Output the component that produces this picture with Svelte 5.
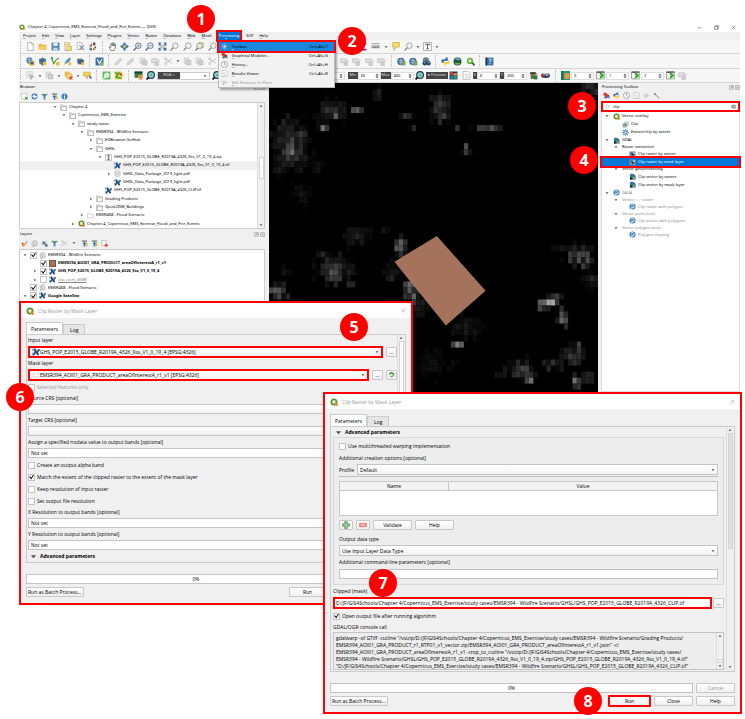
<script lang="ts">
  const icons: Record<string, string> = {
    q: '<path d="M8 1a7 7 0 1 0 0 14 7 7 0 0 0 0-14zm0 3.6A3.4 3.4 0 1 1 8 11.4 3.4 3.4 0 0 1 8 4.600z" fill="#589632" fill-rule="evenodd"/><path d="M8 8h3.500l4 4.500V15.500H12z" fill="#ee7913"/><path d="M8 8l3 .3-.5 2.500z" fill="#f0e64a"/>',
    page: '<path d="M3 1h7l3 3v11H3z" fill="#fff" stroke="#888"/><path d="M10 1v3h3" fill="none" stroke="#888"/>',
    open: '<path d="M1 3h5l1 2h8v9H1z" fill="#e9b63a"/><path d="M1 14l2-7h13l-2 7z" fill="#f6cf62"/>',
    save: '<path d="M1 1h14v14H1z" fill="#4f81ad"/><path d="M4 1h8v6H4z" fill="#e8eef4"/><path d="M4 10h8v5H4z" fill="#c9d8e5"/>',
    layout: '<path d="M3 1h9v14H3z" fill="#fff" stroke="#999"/><path d="M3 3h9v3H3z" fill="#f3c63d"/><path d="M6 8h9v7H6z" fill="#f7df8e" stroke="#c49a20"/>',
    layoutmgr: '<path d="M2 1h9v12H2z" fill="#f7f7f7" stroke="#999"/><path d="M6 6l8 8M14 6l-8 8" stroke="#7d93a8" stroke-width="2"/>',
    style: '<path d="M2 9l4-7 2 5z" fill="#d5482f"/><path d="M9 1h4v5H9z" fill="#444"/><path d="M3 10h4v5H3z" fill="#3b6fa5"/><path d="M9 14l5-6" stroke="#3a3a3a" stroke-width="2"/><circle cx="12" cy="13" r="2" fill="#efb91e"/>',
    hand: '<path d="M5 15L2 9l1.500-1L5 10V3l1.500-.5L7.500 7V1.500H9L9.500 7l1-5h1.500l-.3 5.500 1.300-3 1 .5-1 6-2 4z" fill="#fff" stroke="#444"/>',
    pan: '<path d="M8 0l3 4-1 2 2-1 4 3-4 3-2-1 1 2-3 4-3-4 1-2-2 1-4-3 4-3 2 1-1-2z" fill="#3f78ac"/><path d="M8 5l3 3-3 3-3-3z" fill="#f2c12e"/>',
    zoom: '<circle cx="9.500" cy="6.500" r="5" fill="#e5edf5" stroke="#516a82" stroke-width="1.500"/><path d="M6 10l-5 5" stroke="#516a82" stroke-width="2.500"/><path d="M7 6.500h5M9.500 4v5" stroke="#496f93"/>',
    zoomout: '<circle cx="9.500" cy="6.500" r="5" fill="#e5edf5" stroke="#516a82" stroke-width="1.500"/><path d="M6 10l-5 5" stroke="#516a82" stroke-width="2.500"/><path d="M7 6.500h5" stroke="#496f93"/>',
    full: '<path d="M1 1h5L4 4 6 6 1 6zM15 1v5h-5l2-2-2-3zM1 15v-5h5l-2 2 2 3zM15 15h-5v-5h5z" fill="#3f6f9c"/><circle cx="8" cy="8" r="3" fill="#e7eef5" stroke="#516a82"/>',
    mag: '<circle cx="9.500" cy="6.500" r="5" fill="#f1f1ee" stroke="#8d8d8d" stroke-width="1.300"/><path d="M6 10l-5 5" stroke="#777" stroke-width="2"/>',
    magx: '<path d="M7 1h8v9H7z" fill="#efe8b7" stroke="#a9a16e"/><circle cx="8" cy="7" r="5" fill="#eee" fill-opacity=".7" stroke="#666"/><path d="M5 11l-4 4" stroke="#555" stroke-width="2"/>',
    sigma: '<path d="M3 1h10v3H7l4 4-4 4h6v3H3v-2l5-5-5-5z" fill="#8b1a8b"/>',
    ruler: '<path d="M1 6h14v5H1z" fill="#8c8c8c"/><path d="M3 6v3M6 6v2M9 6v3M12 6v2" stroke="#fff"/><path d="M1 3h14" stroke="#555" />',
    tip: '<path d="M3 1h12v8H9l-4 6V9H3z" fill="#f4dc6c" stroke="#b99b2e"/>',
    text: '<path d="M1 1h14v14H1z" fill="#fff" stroke="#777"/><path d="M4 4h8v2M8 4v8M6 12h4" stroke="#444" fill="none" stroke-width="1.500"/>',
    globe: '<circle cx="6" cy="6" r="5.500" fill="#5186b6"/><path d="M1 5h10M6 1v10" stroke="#b8d0e5"/><path d="M6 7h9v8H6z" fill="#e3a72d"/><path d="M8 9h5v4H8z" fill="#39658f"/>',
    cube: '<path d="M8 1l6 3v7l-6 4-6-4V4z" fill="#4c7aa5"/><path d="M2 4l6 3 6-3M8 7v8" stroke="#173d61" fill="none"/><circle cx="11.500" cy="11.500" r="3.500" fill="#efbd34"/>',
    vector: '<path d="M1 2l4 10 4-7 5-3" stroke="#4d8a46" stroke-width="2" fill="none"/><circle cx="2" cy="2" r="2" fill="#4d8a46"/><circle cx="12" cy="12" r="3.500" fill="#efbd34"/>',
    feather: '<path d="M2 14C4 6 8 2 14 1c0 6-4 10-10 11z" fill="#5f96bf"/><circle cx="12" cy="12" r="3" fill="#efbd34"/>',
    chip: '<path d="M2 3h10v8H2z" fill="#6f7f8f"/><path d="M4 5h10v8H4z" fill="#386591"/><circle cx="12" cy="12" r="3" fill="#efbd34"/>',
    vbox: '<path d="M1 1h14v14H1z" fill="#3b6f9e"/><path d="M4 4l4 8 4-8" stroke="#fff" stroke-width="2" fill="none"/><path d="M10 10h5v5h-5z" fill="#91c35a"/>',
    pencil: '<path d="M2 14l1-4 8-8 3 3-8 8z" fill="#d5d5d5" stroke="#b2b2b2"/>',
    gbox: '<path d="M2 2h8v9H2z" fill="#e4e4e4" stroke="#b6b6b6"/><path d="M6 6h8v8H6z" fill="#cfcfcf" stroke="#b0b0b0"/>',
    gscis: '<path d="M2 3l12 8M2 11l12-8" stroke="#b8b8b8" stroke-width="1.500"/><circle cx="3" cy="12" r="2" fill="none" stroke="#b8b8b8"/><circle cx="3" cy="3" r="2" fill="none" stroke="#b8b8b8"/>',
    gtag: '<path d="M1 3h10l4 4-4 3H1z" fill="#dedede" stroke="#b9b9b9"/><path d="M7 9h6v6H7z" fill="#d0d0d0" stroke="#b5b5b5"/>',
    metaglobe: '<circle cx="7" cy="8" r="6.500" fill="#3c6c99"/><path d="M3 6h8M3 10h8M7 2v12" stroke="#b7cde0" stroke-width="1.500"/><path d="M9 7h6v8H9z" fill="#7fa15f"/>',
    binoc: '<circle cx="7" cy="6" r="5.500" fill="#6c7f90"/><circle cx="5" cy="11" r="4" fill="#274763"/><circle cx="11.500" cy="11" r="4" fill="#274763"/><path d="M4 10h2M11 10h2" stroke="#a8c5de" stroke-width="2"/>',
    python: '<path d="M8 1h4v6H5v3H1V5l2-1h5z" fill="#3a72a4"/><path d="M8 15H5V9h7V6h3v5l-2 2H8z" fill="#f6ce45"/>',
    ball: '<circle cx="8" cy="8" r="7" fill="#264f3a"/><path d="M3 5c3-4 8-3 10 0-3 3-7-1-10 0z" fill="#62b6d9"/><path d="M3 10h10c-2 5-8 5-10 0z" fill="#6fb34b"/>',
    osm: '<circle cx="7" cy="7" r="5.500" fill="#5cb73d"/><circle cx="7" cy="7" r="2.500" fill="#fff"/><path d="M11 10l4 5" stroke="#2e6b1d" stroke-width="3"/>',
    help: '<path d="M1 1h14v14H1z" fill="#4177a8"/><path d="M1 1h3v14H1z" fill="#23384b"/><path d="M7 5c1-2 5-1 4 1l-2 2v1.500M9 11v1.500" stroke="#fff" fill="none" stroke-width="1.500"/>',
    sel: '<path d="M1 1h11v11H1z" fill="#e9e9e9" stroke="#aaa" stroke-dasharray="2"/><path d="M6 6l8 4-4 1-1 4z" fill="#c9c9c9" stroke="#999"/>',
    desel: '<path d="M1 1h9v9H1z" fill="#f2c14a"/><path d="M5 5h9v9H5z" fill="#f8d77c" stroke="#c99c26"/><path d="M10 10l5 5M15 10l-5 5" stroke="#d23" stroke-width="2"/>',
    label: '<path d="M1 2h12v7H8v4H6V9H1z" fill="#f5d45a" stroke="#c39c29"/><path d="M11 9l4 4" stroke="#3b6f9e" stroke-width="3"/>',
    sgreen: '<path d="M1 1h14v14H1z" fill="#5cb85a"/><circle cx="8.500" cy="7.500" r="4" fill="#cfeccb" stroke="#fff" stroke-width="1.500"/><path d="M6 10l-4 4" stroke="#fff" stroke-width="2"/>',
    plug: '<path d="M1 1h14v14H1z" fill="#e8d24b"/><path d="M2 2l5 5M9 2l-5 9 9 2" stroke="#3c9b3b" stroke-width="2.500" fill="none"/><path d="M10 4l4 4" stroke="#b4342a" stroke-width="3"/>',
    scp: '<path d="M1 1h14v11H1z" fill="#2f7f46"/><path d="M1 1h14v3H1z" fill="#1b3c2b"/><path d="M7 7h8v8H9z" fill="#ef9142"/>',
    eye: '<circle cx="9" cy="7" r="6" fill="#8fd0d8" stroke="#1d3b4c" stroke-width="2"/><path d="M5 11l-4 4" stroke="#111" stroke-width="3"/><path d="M6 8l5-3v4z" fill="#3da34d"/>',
    rgbg: '<path d="M1 1h14v14H1z" fill="#153b5c"/><path d="M2 2h5v5H2z" fill="#e33"/><path d="M8 4h6v4H8z" fill="#f2a52a"/><path d="M3 8h5v6H3z" fill="#2c82c9"/><path d="M9 9h5v5H9z" fill="#35a14a"/>',
    bin: '<path d="M2 2h10v4H2z" fill="#3b3b3b"/><path d="M3 6h8v8H3z" fill="#65733a"/><path d="M8 8h7v7H8z" fill="#2f7f46"/><circle cx="12" cy="6" r="2" fill="#d65a2c"/>',
    cloud: '<ellipse cx="8" cy="8" rx="8" ry="4.500" fill="#2e3640"/><path d="M1 6h6v4H1z" fill="#c4382e"/><path d="M8 6h6v3H8z" fill="#4ea6e0"/><path d="M4 4h8v2H4z" fill="#e8e8e8"/>',
    roi: '<path d="M0 0h16v16H0z" fill="#2c9a62"/><path d="M6 4h9v10H6z" fill="#f0935a"/><path d="M0 0h4v16H0z" fill="#1e6f58"/>',
    next: '<path d="M1 2h14v12H1z" fill="#fff" stroke="#555"/><path d="M1 1h14v2H1z" fill="#333"/><path d="M10 3h5v11h-5z" fill="#b9e2b0"/><path d="M7 4l5 4-5 4" fill="none" stroke="#2f9e25" stroke-width="3"/>',
    tif: '<path d="M0 1h5v5H0zM0 9h5v5H0zM10 2h5v4h-5zM10 10h4v4h-4z" fill="#8fb0d0"/><path d="M4 1h3l3 6 4-5 2 2-4 5 2 5h-4l-2-4-4 5H1l4-7z" fill="#1f4c7c"/>',
    folder: '<path d="M1 2h6l1 2h7v11H1z" fill="#e9e9e9" stroke="#8b8b8b"/><path d="M3 6h12v9H3z" fill="#f8f8f8" stroke="#8b8b8b"/>',
    folder2: '<path d="M1 3h6l1 2h7v9H1z" fill="#fafafa" stroke="#aaa"/>',
    zip: '<path d="M1 1h14v14H1z" fill="#f2f2f2" stroke="#888"/><path d="M8 1v9M6 3h4M6 6h4" stroke="#555" stroke-width="1.500"/><path d="M6 10h4v4H6z" fill="#666"/>',
    db: '<path d="M2 3c0-2 12-2 12 0v10c0 2-12 2-12 0z" fill="#f2f2f2" stroke="#999"/><path d="M2 6h12M2 9.500h12" stroke="#999"/>',
    addl: '<path d="M1 1h12v12H1z" fill="#fff" stroke="#999"/><path d="M9 9h6v6H9z" fill="#5aaa48"/>',
    refresh: '<path d="M2 8a6 6 0 0 1 11-3M14 8a6 6 0 0 1-11 3" stroke="#2f77c0" stroke-width="2.500" fill="none"/><path d="M14 1v6H9zM2 15V9h5z" fill="#2f77c0"/>',
    filter: '<path d="M1 2h14l-5 6v7H6V8z" fill="#4b86b4"/><path d="M1 2h14v2H1z" fill="#6c9b51"/>',
    collapse: '<path d="M2 1h12v3H2z" fill="#777"/><path d="M8 4l5 5H10v6H6V9H3z" fill="#3475ae"/><path d="M11 6h4v8h-4z" fill="#e8bd46"/>',
    info: '<circle cx="8" cy="8" r="7" fill="#3f7fbf"/><path d="M8 3.500v2M8 7v6" stroke="#fff" stroke-width="2.500"/>',
    brush: '<path d="M9 9l5-8 1 1-4 8z" fill="#a5703a"/><path d="M2 7l8 2-3 6H3z" fill="#e6993b"/><path d="M1 6l5 1-3 4z" fill="#c5362b"/>',
    group: '<path d="M5 2l6-1 1 11-6 1z" fill="#f2f2f2" stroke="#888"/><path d="M2 6l5-1 1 9-5 1z" fill="#e2e2e2" stroke="#888"/><path d="M11 4h3v9h-3" fill="none" stroke="#999"/>',
    eyes: '<path d="M1 7c3-5 9-5 12 0-3 5-9 5-12 0z" fill="#e8e8e8" stroke="#555"/><circle cx="7" cy="7" r="2.500" fill="#345e86"/><path d="M9 10h6v5H9z" fill="#44688b"/>',
    rem: '<path d="M2 1h10v12H2z" fill="#fff" stroke="#888"/><circle cx="12" cy="12" r="3.500" fill="#d9483b"/>',
    gears: '<circle cx="5" cy="5" r="4" fill="#d8342a"/><circle cx="10.500" cy="9" r="4" fill="#b8362e"/><circle cx="6" cy="12" r="3" fill="#5f6f7f"/><circle cx="13" cy="12" r="2.500" fill="#6f7f8f"/>',
    clock: '<circle cx="8" cy="8" r="7" fill="#fafafa" stroke="#8a8a8a" stroke-width="1.500"/><path d="M8 3v5l3 2" stroke="#777" fill="none" stroke-width="1.500"/>',
    doc: '<path d="M2 1h9l3 3v11H2z" fill="#fff" stroke="#9a9a9a"/><path d="M5 6h6M5 9h6M5 12h6" stroke="#aaa"/>',
    edit: '<path d="M1 4h8v5H1z" fill="#d9d9c0"/><path d="M8 3l7 5-7 5z" fill="#cfcfcf"/><path d="M4 9h3v5H4z" fill="#c3c3a8"/>',
    wrench: '<path d="M2 3a3 3 0 0 1 5 3l8 7-2 2-7-8a3 3 0 0 1-4-4z" fill="#8a8a8a"/><path d="M9 9l5 5" stroke="#c9a13b" stroke-width="2"/>',
    gear: '<path d="M8 0v16M0 8h16M2.300 2.300l11.400 11.400M13.700 2.300L2.300 13.700" stroke="#6d9cc8" stroke-width="2.500"/><circle cx="8" cy="8" r="5" fill="#6d9cc8"/><circle cx="8" cy="8" r="2" fill="#fff"/>',
    clip: '<path d="M2 6h9v8H2z" fill="#9fc0a6" stroke="#6b8a73"/><path d="M6 2h9v8H6z" fill="#dde6ea" stroke="#7e97a8"/><path d="M6 6h5v4H6z" fill="#4f8a5c"/>',
    gdal: '<path d="M2 9a6 6 0 0 1 9-6l4 4v8H2z" fill="#2e5d4f"/><circle cx="6" cy="5" r="4" fill="#3b77ad"/><path d="M8 8h6v6H8z" fill="#5aa7a0"/><path d="M3 11h4v4H3z" fill="#222"/>',
    rast: '<path d="M1 1h14v14H1z" fill="#6f8ca3"/><path d="M3 3l9 5-3 4z" fill="#1f3c52"/><path d="M10 3h4v4h-4z" fill="#c1d5e3"/>',
    saga: '<circle cx="8" cy="8" r="7" fill="#3d83bd"/><path d="M4 5c4-3 7 0 8 1M4 9c3 3 6 0 9-1M5 13c3-1 5-2 6-4" stroke="#fff" stroke-width="1.800" fill="none"/>',
    search: '<circle cx="7" cy="7" r="4.500" fill="none" stroke="#999" stroke-width="1.500"/><path d="M10 10l5 5" stroke="#999" stroke-width="1.500"/>',
    clear: '<path d="M5 2h10v12H5L0 8z" fill="#8c8c8c"/><path d="M7 5l5 6M12 5l-5 6" stroke="#fff" stroke-width="1.500"/>',
    poly: '<path d="M2 12l1-7 6 1 5-3v8z" fill="#fafafa" stroke="#bbb"/>',
    adv: '<path d="M2 8a6 6 0 0 1 11-3l2-1-1 6-5-2 2-1a3 3 0 0 0-5 1z" fill="#4f9f4a"/><path d="M14 9a6 6 0 0 1-10 4l3-3c2 1 4 1 5-2z" fill="#77b570"/>',
    plus: '<path d="M5.500 1h5v4.500H15v5h-4.500V15h-5v-4.500H1v-5h4.500z" fill="#78b07a" stroke="#3c7a45"/><path d="M8 3v10M3 8h10" stroke="#d7ead7"/>',
    minus: '<path d="M1 4.500h14v7H1z" fill="#ee8a8a" stroke="#df5b5b"/><path d="M4 8h8" stroke="#fff" stroke-width="1.500"/>',
    down: '<path d="M2 5h12l-6 7z" fill="#555"/>',
    up: '<path d="M2 11h12L8 4z" fill="#555"/>',
    right: '<path d="M5 2v12l7-6z" fill="#555"/>',
    spin: '<path d="M4 6.500h8L8 2zM4 9.500h8L8 14z" fill="#444"/>',
    close: '<path d="M2 2l12 12M14 2L2 14" stroke="#8a8a8a" stroke-width="1.500"/>',
    float: '<path d="M2 2h12v12H2z" fill="none" stroke="#777" stroke-width="1.500"/><path d="M5 11l6-6M7 5h4v4" stroke="#777" fill="none" stroke-width="1.500"/>',
    dockx: '<path d="M2 2h12v12H2z" fill="none" stroke="#777" stroke-width="1.500"/><path d="M5 5l6 6M11 5l-6 6" stroke="#666" stroke-width="1.500"/>',
    min: '<path d="M2 9h12" stroke="#333" stroke-width="1.500"/>',
    max: '<path d="M2 5h9v9H2zM5 5V2h9v9h-3" fill="none" stroke="#333" stroke-width="1.500"/>',
    wx: '<path d="M2 2l12 12M14 2L2 14" stroke="#333" stroke-width="1.500"/>',
  };

  const menus = ['Project', 'Edit', 'View', 'Layer', 'Settings', 'Plugins', 'Vector', 'Raster', 'Database', 'Web', 'Mesh'];
  const popup = [
    { i: 'gear', t: 'Toolbox', k: 'Ctrl+Alt+T', on: true },
    { i: 'gears', t: 'Graphical Modeler...', k: 'Ctrl+Alt+G' },
    { i: 'clock', t: 'History...', k: 'Ctrl+Alt+H' },
    { i: 'doc', t: 'Results Viewer', k: 'Ctrl+Alt+R' },
    { i: 'edit', t: 'Edit Features In-Place', k: '', off: true },
  ];

  const bar1 = ['page open save layout layoutmgr style', 'hand pan zoom zoomout full mag mag magx mag magx mag mag', 'layout page layoutmgr clock refresh sel sel', 'sigma ruler v tip mag v text v'];
  const bar2 = ['globe cube vector feather chip', 'vbox', 'pencil pencil gbox gtag gscis v gbox gbox gscis gbox gbox gtag', 'gtag gtag gtag gtag gtag gtag gtag gtag gtag gtag', 'metaglobe metaglobe binoc', 'python ball osm', 'help'];

  const tree = [
    [3, 'd', 'folder', 'Chapter 4'],
    [4, 'd', 'folder', 'Copernicus_EMS_Exercise'],
    [5, 'd', 'folder', 'study cases'],
    [6, 'd', 'folder', 'EMSR394 - Wildfire Scenario'],
    [7, 'r', 'folder', 'EOBrowser-SciHub'],
    [7, 'd', 'folder', 'GHSL'],
    [8, 'd', 'zip', 'GHS_POP_E2015_GLOBE_R2019A_4326_9ss_V1_0_19_4.zip'],
    [9, '', 'tif', 'GHS_POP_E2015_GLOBE_R2019A_4326_9ss_V1_0_19_4.tif'],
    [9, 'r', 'db', 'GHSL_Data_Package_2019_light.pdf'],
    [9, '', 'tif', 'GHSL_Data_Package_2019_light.pdf'],
    [8, '', 'tif', 'GHS_POP_E2015_GLOBE_R2019A_4326_CLIP.tif'],
    [7, 'r', 'folder', 'Grading Products'],
    [7, 'r', 'folder', 'QuickOSM_Buildings'],
    [6, 'r', 'folder2', 'EMSR468 - Flood Scenario'],
    [5, 'r', 'q', 'Chapter-4_Copernicus_EMS_Exercise_Flood_and_Fire_Events'],
  ] as [number, string, string, string][];

  const layers = [
    { l: 0, a: 'd', c: true, i: 'group', t: 'EMSR394 - Wildfire Scenario', s: '' },
    { l: 1, a: '', c: true, i: 'swatch', t: 'EMSR394_AOI01_GRA_PRODUCT_areaOfInterestA_r1_v1', s: 'bold' },
    { l: 1, a: 'r', c: true, i: 'tif', t: 'GHS_POP_E2015_GLOBE_R2019A_4326_9ss_V1_0_19_4', s: 'bold' },
    { l: 1, a: 'r', c: false, i: 'tif', t: 'clip_event_dNBR', s: 'ghost' },
    { l: 0, a: '', c: true, i: 'group', t: 'EMSR468 - Flood Scenario', s: '' },
    { l: 0, a: 'd', c: true, i: 'tif', t: 'Google Satellite', s: 'bold' },
  ];

  const tools = [
    [0, 'd', 'q', 'Vector overlay', ''],
    [1, '', 'clip', 'Clip', ''],
    [1, '', 'gear', 'Extract/clip by extent', ''],
    [0, 'd', 'gdal', 'GDAL', ''],
    [1, 'd', '', 'Raster extraction', ''],
    [2, '', 'rast', 'Clip raster by extent', ''],
    [2, '', 'rast', 'Clip raster by mask layer', 'picked'],
    [1, 'd', '', 'Vector geoprocessing', ''],
    [2, '', 'gdal', 'Clip vector by extent', ''],
    [2, '', 'gdal', 'Clip vector by mask layer', ''],
    [0, 'd', 'saga', 'SAGA', 'dim'],
    [1, 'd', '', 'Vector <-> raster', 'dim'],
    [2, '', 'saga', 'Clip raster with polygon', 'dim'],
    [1, 'd', '', 'Vector point tools', 'dim'],
    [2, '', 'saga', 'Clip points with polygons', 'dim'],
    [1, 'd', '', 'Vector polygon tools', 'dim'],
    [2, '', 'saga', 'Polygon clipping', 'dim'],
  ] as [number, string, string, string, string][];

  // population clusters: centre x, centre y, radius x, radius y, brightness
  const clusters = [
    [75, 200, 62, 90, 62], [80, 205, 22, 44, 100], [105, 165, 30, 16, 80], [200, 95, 56, 35, 52], [213, 104, 14, 14, 110], [275, 92, 25, 12, 100],
    [340, 45, 14, 22, 60], [525, 85, 34, 48, 80], [602, 208, 16, 30, 150], [670, 147, 50, 12, 120], [682, 147, 20, 10, 130], [425, 108, 20, 10, 50],
    [445, 146, 16, 10, 70], [577, 146, 10, 10, 90], [180, 147, 18, 10, 150], [160, 265, 28, 18, 22], [115, 345, 34, 40, 22],
    [275, 465, 44, 36, 36], [358, 458, 16, 10, 45], [408, 496, 20, 36, 130], [210, 570, 60, 50, 65], [212, 590, 34, 24, 130], [180, 530, 34, 16, 45],
    [262, 605, 18, 12, 90], [40, 635, 34, 30, 110], [62, 640, 12, 22, 110], [440, 630, 26, 40, 120], [460, 680, 30, 46, 40], [385, 575, 34, 36, 40],
    [600, 740, 56, 40, 28], [578, 790, 24, 10, 150], [940, 530, 50, 36, 85], [962, 545, 16, 34, 110], [890, 508, 40, 12, 40], [975, 595, 34, 30, 45],
    [852, 662, 40, 18, 210], [840, 680, 26, 12, 120], [892, 704, 14, 44, 150], [925, 825, 44, 34, 75], [939, 800, 10, 24, 110],
    [870, 852, 40, 18, 75], [770, 870, 50, 36, 80], [790, 890, 20, 26, 130], [710, 882, 30, 14, 45], [930, 908, 16, 24, 170], [970, 890, 24, 20, 60],
    [500, 850, 50, 60, 16], [980, 25, 34, 24, 60], [60, 575, 22, 18, 24], [560, 850, 30, 30, 14],
  ];
  const noise = (a: number, b: number) => Math.abs(Math.sin(a * 12.9898 + b * 78.233) * 43758.5453) % 1;
  const cells: { x: number; y: number; g: number }[] = [];
  for (let r = 0; r < 52; r++) {
    for (let c = 0; c < 76; c++) {
      const x = 12 + c * 13;
      const y = 10 + r * 18;
      let g = 0;
      for (const [cx, cy, rx, ry, p] of clusters) {
        const d = Math.hypot((x + 6 - cx) / rx, (y + 9 - cy) / ry) + (noise(r + 3, c + 7) - 0.5) * 0.6;
        if (d < 1) g = Math.max(g, p * Math.min(1, 1.1 - d) * (0.5 + noise(c, r) * 0.6));
      }
      if (g > 5) cells.push({ x, y, g: Math.round(g) });
    }
  }

  const command = `gdalwarp -of GTiff -cutline "/vsizip/D:/JF/GIS4Schools/Chapter 4/Copernicus_EMS_Exercise/study cases/EMSR394 - Wildfire Scenario/Grading Products/
EMSR394_AOI01_GRA_PRODUCT_r1_RTP01_v1_vector.zip/EMSR394_AOI01_GRA_PRODUCT_areaOfInterestA_r1_v1.json" -cl
EMSR394_AOI01_GRA_PRODUCT_areaOfInterestA_r1_v1 -crop_to_cutline "/vsizip/D:/JF/GIS4Schools/Chapter 4/Copernicus_EMS_Exercise/study cases/
EMSR394 - Wildfire Scenario/GHSL/GHS_POP_E2015_GLOBE_R2019A_4326_9ss_V1_0_19_4.zip/GHS_POP_E2015_GLOBE_R2019A_4326_9ss_V1_0_19_4.tif"
"D:/JF/GIS4Schools/Chapter 4/Copernicus_EMS_Exercise/study cases/EMSR394 - Wildfire Scenario/GHSL/GHS_POP_E2015_GLOBE_R2019A_4326_CLIP.tif"`;
</script>

{#snippet ic(name: string)}
  <svg class="ic" viewBox="0 0 16 16" aria-hidden="true">{@html icons[name]}</svg>
{/snippet}

{#snippet tool(name: string)}
  <button class={name === 'v' ? 'tool caret' : 'tool'} aria-label={name}>{@render ic(name === 'v' ? 'down' : name)}</button>
{/snippet}

{#snippet group(names: string)}
  <div class="group">
    {#each names.split(' ') as n}{@render tool(n)}{/each}
  </div>
{/snippet}

{#snippet spin(label: string, value: string)}
  <div class="spin"><input aria-label={label} {value} />{@render ic('spin')}</div>
{/snippet}

{#snippet dockHead(title: string)}
  <div class="dock-head"><span>{title}</span>{@render ic('float')}{@render ic('dockx')}</div>
{/snippet}

{#snippet scroll(size: string)}
  <div class="scroll {size}">{@render ic('up')}<i class="thumb"></i>{@render ic('down')}</div>
{/snippet}

{#snippet check(label: string, on: boolean)}
  <label class="check"><input type="checkbox" checked={on} />{label}</label>
{/snippet}

{#snippet numeric(id: string, label: string, value: string)}
  <label class="lab" for={id}>{label}</label>
  <input class="field" {id} {value} />
{/snippet}

{#snippet titlebar()}
  <header class="dlg-title">{@render ic('q')}<span>Clip Raster by Mask Layer</span><button aria-label="Close dialog">{@render ic('close')}</button></header>
{/snippet}

{#snippet tabs()}
  <div class="tabs"><button class="tab on">Parameters</button><button class="tab">Log</button></div>
{/snippet}

{#snippet footer(marked: boolean)}
  <div class="foot">
    <div class="progress" role="progressbar" aria-valuenow="0">0%</div>
    <button class="btn std off">Cancel</button>
  </div>
  <div class="foot">
    <button class="btn batch">Run as Batch Process...</button>
    <span class="grow"></span>
    <button class="btn std" class:marked>Run</button>
    <button class="btn std">Close</button>
    <button class="btn std">Help</button>
  </div>
{/snippet}

<div class="page">
  <main class="window">
    <header class="title">
      {@render ic('q')}<span>Chapter-4_Copernicus_EMS_Exercise_Flood_and_Fire_Events — QGIS</span>
      <div class="winbtns">
        <button aria-label="Minimize">{@render ic('min')}</button>
        <button aria-label="Maximize">{@render ic('max')}</button>
        <button aria-label="Close">{@render ic('wx')}</button>
      </div>
    </header>
    <nav class="menubar">
      {#each menus as m}<button><u>{m[0]}</u>{m.slice(1)}</button>{/each}
      <div class="menu-open">
        <button class="active">Pro<u>c</u>essing</button>
        <div class="popup">
          {#each popup as p}
            <button class="mi" class:on={p.on} class:off={p.off}>{@render ic(p.i)}<span><u>{p.t[0]}</u>{p.t.slice(1)}</span><kbd>{p.k}</kbd></button>
          {/each}
        </div>
      </div>
      <button>SCP</button>
      <button><u>H</u>elp</button>
    </nav>
    <div class="toolbar">{#each bar1 as g}{@render group(g)}{/each}</div>
    <div class="toolbar">{#each bar2 as g}{@render group(g)}{/each}</div>
    <div class="toolbar bands">
      {@render group('sel v gbox v desel v label')}
      {@render group('sgreen plug')}
      <div class="group">
        {@render tool('scp')}{@render tool('eye')}
        <div class="rgb"><b>RGB =</b><select aria-label="RGB composite"><option>-</option></select>{@render ic('down')}</div>
        {@render tool('eye')}
      </div>
      <div class="group wide">{@render spin('Zoom', '')}</div>
      <div class="group bare">
        <b class="tag">Min</b>{@render spin('Min', '60')}<b class="tag">Max</b>{@render spin('Max', '400')}
        {@render tool('eye')}<b class="tag big">● Preview</b>{@render tool('rgbg')}{@render tool('doc')}
        <b class="tag">S</b>{@render spin('Size', '0')}<b class="tag">T</b>{@render spin('Radius', '200')}
        {@render tool('bin')}{@render tool('cloud')}
      </div>
      <div class="group">
        {@render tool('roi')}{@render spin('Red', '0')}{@render tool('next')}{@render spin('Green', '1')}{@render tool('next')}{@render spin('Blue', '2')}{@render tool('next')}{@render tool('gtag')}
      </div>
    </div>

    <div class="work">
      <aside class="left">
        <section>
          {@render dockHead('Browser')}
          <div class="dock-tools">{#each ['addl', 'refresh', 'filter', 'collapse', 'info'] as n}{@render tool(n)}{/each}</div>
          <div class="listbox browser">
            <ul>
              {#each tree as [lvl, a, i, t], n}
                <li class:sel={n === 7} style:padding-left="{lvl * 9 + 4}px">
                  <span class="arrow">{#if a}{@render ic(a === 'd' ? 'down' : 'right')}{/if}</span>{@render ic(i)}<span>{t}</span>
                </li>
              {/each}
            </ul>
            {@render scroll('mid')}
          </div>
        </section>
        <section>
          {@render dockHead('Layers')}
          <div class="dock-tools">{#each ['brush', 'group', 'eyes', 'filter', 'gscis', 'v', 'collapse', 'collapse', 'rem'] as n}{@render tool(n)}{/each}</div>
          <div class="listbox layers">
            <ul>
              {#each layers as r}
                <li style:padding-left="{r.l * 10 + 1}px">
                  <span class="arrow">{#if r.a}{@render ic(r.a === 'd' ? 'down' : 'right')}{/if}</span>
                  <input type="checkbox" checked={r.c} aria-label={r.t} />
                  {#if r.i === 'swatch'}<i class="swatch"></i>{:else}{@render ic(r.i)}{/if}
                  <span class={r.s}>{r.t}</span>
                </li>
              {/each}
            </ul>
          </div>
        </section>
      </aside>

      <div class="map">
        <svg viewBox="12 10 988 925" preserveAspectRatio="xMidYMin slice" role="img" aria-label="Population raster">
          {#each cells as c}<rect x={c.x} y={c.y} width="13" height="18" fill="rgb({c.g},{c.g},{c.g})" />{/each}
          <path d="M516 468L662 632 543 736 389 545z" fill="#a5735b" />
        </svg>
      </div>

      <aside class="right">
        {@render dockHead('Processing Toolbox')}
        <div class="dock-tools">{#each ['gears', 'python', 'clock', 'doc', 'edit', 'wrench'] as n}{@render tool(n)}{/each}</div>
        <div class="search">{@render ic('search')}<input aria-label="Search" value="clip" />{@render ic('clear')}</div>
        <div class="alg-box">
          <ul class="algs">
            {#each tools as [lvl, a, i, t, s]}
              <li class={s} class:short={!i} style:padding-left="{lvl * 9}px">
                {#if lvl < 2}<span class="arrow">{#if a}{@render ic('down')}{/if}</span>{:else}<span class="indent"></span>{/if}
                {#if i}{@render ic(i)}{/if}<span>{t}</span>
              </li>
            {/each}
          </ul>
        </div>
      </aside>
    </div>
  </main>

  <section class="dialog first">
    {@render titlebar()}
    <div class="dlg-body">
      {@render tabs()}
      <div class="pane">
        <div class="form">
          <label class="lab" for="inl">Input layer</label>
          <div class="line">
            <div class="combo marked">{@render ic('tif')}<select id="inl"><option>GHS_POP_E2015_GLOBE_R2019A_4326_9ss_V1_0_19_4 [EPSG:4326]</option></select>{@render ic('down')}</div>
            <button class="btn sq">...</button>
          </div>
          <label class="lab" for="mskl">Mask layer</label>
          <div class="line">
            <div class="combo marked">{@render ic('poly')}<select id="mskl"><option>EMSR394_AOI01_GRA_PRODUCT_areaOfInterestA_r1_v1 [EPSG:4326]</option></select>{@render ic('down')}</div>
            <button class="btn sq">...</button>
            <button class="btn sq" aria-label="Advanced options">{@render ic('adv')}</button>
          </div>
          <div class="faded">{@render check('Selected features only', false)}</div>
          <label class="lab" for="scrs">Source CRS [optional]</label>
          <div class="combo plain"><select id="scrs"><option></option></select>{@render ic('down')}</div>
          <label class="lab" for="tcrs">Target CRS [optional]</label>
          <div class="combo plain"><select id="tcrs"><option></option></select>{@render ic('down')}</div>
          {@render numeric('nodata', 'Assign a specified nodata value to output bands [optional]', 'Not set')}
          {@render check('Create an output alpha band', false)}
          {@render check('Match the extent of the clipped raster to the extent of the mask layer', true)}
          {@render check('Keep resolution of input raster', false)}
          {@render check('Set output file resolution', false)}
          {@render numeric('xres', 'X Resolution to output bands [optional]', 'Not set')}
          {@render numeric('yres', 'Y Resolution to output bands [optional]', 'Not set')}
          <h3>{@render ic('down')}Advanced parameters</h3>
        </div>
        {@render scroll('tall')}
      </div>
      {@render footer(false)}
    </div>
  </section>

  <section class="dialog second">
    {@render titlebar()}
    <div class="dlg-body">
      {@render tabs()}
      <div class="pane">
        <div class="form">
          <h3>{@render ic('down')}Advanced parameters</h3>
          <div class="box">
            {@render check('Use multithreaded warping implementation', false)}
            <span class="lab">Additional creation options [optional]</span>
            <div class="line">
              <label for="prof">Profile</label>
              <div class="combo"><select id="prof"><option>Default</option></select>{@render ic('down')}</div>
            </div>
            <hr />
            <table>
              <thead><tr><th class="name">Name</th><th>Value</th></tr></thead>
              <tbody><tr><td colspan="2"></td></tr></tbody>
            </table>
            <div class="line opts">
              <button class="btn ico" aria-label="Add">{@render ic('plus')}</button>
              <button class="btn ico" aria-label="Remove">{@render ic('minus')}</button>
              <button class="btn std">Validate</button>
              <button class="btn std">Help</button>
            </div>
            <label class="lab" for="odt">Output data type</label>
            <div class="combo"><select id="odt"><option>Use Input Layer Data Type</option></select>{@render ic('down')}</div>
            <label class="lab" for="extra">Additional command-line parameters [optional]</label>
            <input class="field" id="extra" />
          </div>
          <label class="lab" for="outp">Clipped (mask)</label>
          <div class="line file">
            <input class="field marked" id="outp" value="D:/JF/GIS4Schools/Chapter 4/Copernicus_EMS_Exercise/study cases/EMSR394 - Wildfire Scenario/GHSL/GHS_POP_E2015_GLOBE_R2019A_4326_CLIP.tif" />
            <button class="btn sq">...</button>
          </div>
          {@render check('Open output file after running algorithm', true)}
          <label class="lab" for="cmd">GDAL/OGR console call</label>
          <div class="console"><textarea id="cmd" readonly value={command}></textarea>{@render scroll('low')}</div>
        </div>
        {@render scroll('half')}
      </div>
      {@render footer(true)}
    </div>
  </section>

  <span class="badge b1">1</span>
  <span class="badge b2">2</span>
  <span class="badge b3">3</span>
  <span class="badge b4">4</span>
  <span class="badge b5">5</span>
  <span class="badge b6">6</span>
  <span class="badge b7">7</span>
  <span class="badge b8">8</span>
</div>

<style>
  .page {
    position: relative;
    min-height: 100vh;
    box-sizing: border-box;
    padding: 22px 5px 0 19px;
    background: #fff;
    overflow: hidden;
    font: 4px/6px 'Noto Sans', 'Open Sans', sans-serif;
    color: #000;
  }
  .page :global(*) { box-sizing: border-box; }
  button, input, select, textarea { font: inherit; color: inherit; margin: 0; padding: 0; border: 0; background: none; min-width: 0; border-radius: 0; }
  ul { list-style: none; margin: 0; padding: 0; }
  .ic { width: 8px; height: 8px; flex: none; display: block; }
  .window { background: #f0f0f0; }
  .title { display: flex; align-items: center; gap: 3px; height: 10px; background: #fff; }
  .title .ic { width: 6px; height: 6px; }
  .winbtns { margin-left: auto; display: flex; gap: 12px; padding-right: 4px; }
  .winbtns .ic { width: 5px; height: 5px; }

  .menubar { display: flex; align-items: center; gap: 6px; height: 8px; padding-left: 4px; }
  .menubar u { text-decoration-thickness: 1px; text-decoration-color: #bbb; }
  .menu-open { position: relative; }
  .active { display: block; padding: 1px; height: 8px; background: #0078d7; color: #fff; outline: 2px solid #f00; }
  .popup { position: absolute; z-index: 2; top: 8px; left: 0; width: 117px; padding: 1px 0 0; background: #f2f2f2; border: 1px solid #bbb; box-shadow: 2px 2px 2px #0005; }
  .mi { display: flex; align-items: center; gap: 4px; width: 100%; height: 9px; padding: 0 6px 0 2px; text-align: left; }
  .mi span { flex: 1; }
  .mi kbd { font: inherit; }
  .mi .ic { width: 7px; height: 7px; }
  .mi.on { background: #1a86dc; outline: 2px solid #f00; }
  .mi.off { color: #999; }

  .toolbar { display: flex; align-items: center; height: 14px; border-bottom: 1px solid #d5d5d5; background: #f6f6f6; padding-left: 1px; overflow: hidden; }
  .toolbar + .toolbar { height: 15px; }
  .toolbar + .bands { height: 14px; padding-right: 48px; }
  .group { display: flex; align-items: center; padding-left: 3px; margin-right: 3px; border-left: 1px dotted #bbb; }
  .tool { display: flex; align-items: center; justify-content: center; width: 12px; height: 12px; flex: none; }
  .toolbar .tool:nth-child(even) { width: 13px; }
  .tool .ic { width: 9px; height: 9px; }
  .toolbar .tool.caret, .tool.caret { width: 7px; }
  .tool.caret .ic { width: 4px; height: 4px; }
  .bare { border-left: 0; padding-left: 0; }
  .rgb { display: flex; align-items: center; width: 53px; height: 8px; background: #fff; border: 1px solid #ccc; }
  .rgb b { width: 22px; height: 7px; background: #444; color: #ddd; text-align: center; font-weight: 400; }
  .rgb select { flex: 1; appearance: none; height: 6px; }
  .rgb .ic { width: 4px; height: 4px; margin-right: 2px; }
  .wide { flex: 1; }
  .wide .spin { flex: 1; }
  .spin { display: flex; align-items: center; width: 23px; height: 8px; background: #fff; border: 1px solid #ddd; }
  .spin input { flex: 1; width: 10px; padding-left: 2px; height: 6px; }
  .spin .ic { width: 6px; height: 6px; }
  .tag { background: #444; color: #ddd; height: 7px; padding: 0 1px; font-weight: 400; }
  .tag.big { padding: 0 2px; white-space: nowrap; }

  .work { display: grid; grid-template-columns: 246px 1fr 139px; gap: 3px; height: 309px; }
  .left { display: flex; flex-direction: column; gap: 2px; padding-top: 1px; }
  .dock-head { display: flex; align-items: center; gap: 1px; height: 6px; }
  .dock-head span { flex: 1; padding-left: 1px; }
  .dock-head .ic { width: 5px; height: 5px; }
  .dock-tools { display: flex; align-items: center; height: 12px; }
  .dock-tools .tool { width: 10px; }
  .dock-tools .tool .ic { width: 7px; height: 7px; }
  .dock-tools .tool.caret .ic { width: 4px; height: 4px; }
  .listbox { display: flex; background: #fff; border: 1px solid #ccc; }
  .listbox ul { flex: 1; display: grid; grid-auto-rows: 1fr; }
  .browser { height: 127px; }
  .layers { height: 53px; padding: 1px 0; }
  li { display: flex; align-items: center; gap: 2px; white-space: nowrap; }
  li .ic { width: 7px; height: 7px; }
  .arrow { width: 7px; display: flex; justify-content: center; flex: none; }
  .arrow .ic { width: 4px; height: 4px; }
  .indent { width: 7px; }
  .sel { background: #f0f0f0; }
  .bold { font-weight: 700; }
  .ghost { font-style: italic; color: #888; text-decoration: underline; }
  .swatch { width: 7px; height: 7px; background: #a5735b; border: 1px solid #7b5040; }

  .scroll { display: flex; flex-direction: column; align-items: center; width: 7px; flex: none; background: #f0f0f0; border-left: 1px solid #ddd; padding: 1px 0; }
  .scroll .ic { width: 4px; height: 4px; }
  .thumb { flex: 1; width: 5px; margin: 1px 0; background: #fafafa; border: 1px solid #d4d4d4; }
  .mid .thumb { flex: none; height: 22px; margin: 49px 0 auto; }
  .half .thumb { flex: none; height: 116px; margin: 1px 0 auto; background: #e0e0e0; }
  .low .thumb { flex: none; height: 4px; margin: auto 0 1px; }

  .map { background: #000; overflow: hidden; margin-left: 1px; }
  .map svg { display: block; width: 100%; height: 100%; }

  .right { background: #f0f0f0; padding-top: 1px; display: flex; flex-direction: column; }
  .right .dock-tools { height: 11px; }
  .search { display: flex; align-items: center; gap: 3px; height: 11px; padding: 0 2px; border: 2px solid #f00; background: #fff; }
  .search .ic { width: 5px; height: 5px; }
  .search input { flex: 1; height: 6px; }
  .alg-box { flex: 1; background: #fff; border: 1px solid #ddd; border-top: 0; }
  .algs { display: flex; flex-direction: column; height: 127px; }
  .algs li { flex: 8; }
  .algs li.short { flex: 6; }
  .algs .arrow { width: 9px; }
  .algs .dim { color: #888; }
  .algs .picked { background: #0078d7; color: #fff; outline: 2px solid #f00; }

  .dialog { position: absolute; z-index: 3; background: #f0f0f0; border: 2px solid #f00; font: 5px/8px 'Open Sans', 'Noto Sans', sans-serif; }
  .first { left: 19px; top: 301px; width: 394px; }
  .second { left: 323px; top: 392px; width: 419px; }
  .dlg-title { display: flex; align-items: center; gap: 4px; height: 15px; padding: 0 5px; background: #fff; color: #999; }
  .dlg-title span { flex: 1; }
  .dlg-title button .ic { width: 5px; height: 5px; }
  .dlg-body { padding: 4px 5px 6px; }
  .tabs { display: flex; align-items: flex-end; height: 12px; }
  .tab { height: 10px; padding: 0 6px; border: 1px solid #ccc; border-bottom: 0; background: #e6e6e6; }
  .tab.on { height: 12px; background: #fff; padding: 0 4px; }
  .pane { display: flex; border: 1px solid #ccc; padding: 0 1px 1px 0; }
  .form { flex: 1; min-width: 0; padding: 0 2px 0 1px; }
  .first .form { padding-right: 0; }
  .lab { display: block; width: fit-content; height: 10px; line-height: 10px; }
  .line { display: flex; align-items: center; gap: 3px; }
  .line.file { gap: 1px; margin: 1px 0; }
  .field { display: block; width: 100%; height: 10px; margin: 1px 0; padding: 0 2px; background: #fff; border: 1px solid #c4c4c4; }
  .combo { display: flex; align-items: center; flex: 1; height: 11px; padding: 0 2px; background: linear-gradient(#fff, #f2f2f2); border: 1px solid #c4c4c4; }
  .combo select { flex: 1; appearance: none; height: 8px; }
  .combo > .ic:last-child { width: 4px; height: 4px; }
  .combo.plain { height: 10px; margin: 1px 0; }
  .combo.marked { height: 12px; margin-top: 1px; }
  .combo.marked, .field.marked { border: 2px solid #f00; }
  .field.marked { height: 12px; margin: 0; padding: 0 1px; }
  .check { display: flex; align-items: center; gap: 2px; height: 12px; width: fit-content; }
  input[type='checkbox'] { appearance: none; width: 7px; height: 7px; flex: none; background: #fff; border: 1px solid #c4c4c4; position: relative; }
  input[type='checkbox']:checked::before { content: ''; position: absolute; inset: 0; background: #111; clip-path: polygon(0 45%, 20% 35%, 42% 65%, 85% 0, 100% 10%, 45% 100%); }
  .faded { color: #999; }
  h3 { display: flex; align-items: center; gap: 3px; height: 10px; margin: 0; padding-left: 2px; font: 700 5px/8px 'Open Sans', 'Noto Sans', sans-serif; }
  h3 .ic { width: 7px; height: 7px; }
  .btn { height: 10px; background: linear-gradient(#fff, #f0f0f0); border: 1px solid #c8c8c8; border-radius: 1px; text-align: center; line-height: 8px; flex: none; }
  .btn.marked { width: 43px; height: 12px; margin: -1px 0; border: 2px solid #f00; }
  .btn.sq { width: 11px; display: flex; justify-content: center; align-items: center; }
  .btn.sq .ic { width: 7px; height: 7px; }
  .btn.ico { width: 14px; display: flex; justify-content: center; align-items: center; }
  .std { width: 39px; }
  .off { color: #999; }
  .batch { padding: 0 1px; }
  .foot { display: flex; gap: 3px; margin-top: 3px; }
  .pane + .foot { margin-top: 11px; }
  .grow { flex: 1; }
  .progress { flex: 1; height: 10px; background: #fff; border: 1px solid #c4c4c4; text-align: center; line-height: 8px; }
  .first .std { width: 37px; }

  .second .dlg-body { padding-top: 5px; }
  .second .form { padding: 0 2px; }
  .box { border: 1px solid #d8d8d8; background: #ededed; padding: 2px 5px 4px; margin-bottom: 1px; }
  .box .lab { padding-top: 1px; height: 12px; }
  hr { height: 1px; margin: 1px 0 4px; border: 0; background: #c0c0c0; }
  table { width: 100%; border-collapse: collapse; background: #fff; table-layout: fixed; }
  th, td { border: 1px solid #c8c8c8; padding: 0; font-weight: 400; height: 9px; }
  th { background: #f3f3f3; }
  .name { width: 109px; }
  td { height: 25px; }
  .opts { margin: 4px 0 3px; }
  .console { display: flex; height: 38px; border: 1px solid #c4c4c4; background: #ededed; }
  textarea { flex: 1; resize: none; overflow: hidden; white-space: pre; padding: 2px; line-height: 7px; }

  .badge { position: absolute; z-index: 5; width: 28px; height: 28px; border-radius: 50%; background: #f00; color: #fff; font: 700 16px/28px 'Open Sans', 'Noto Sans', sans-serif; text-align: center; }
  .b1 { left: 187px; top: 5px; }
  .b2 { left: 338px; top: 27px; }
  .b3 { left: 568px; top: 92px; }
  .b4 { left: 570px; top: 146px; }
  .b5 { left: 340px; top: 313px; }
  .b6 { left: 6px; top: 383px; }
  .b7 { left: 369px; top: 569px; }
  .b8 { left: 574px; top: 687px; }
</style>
